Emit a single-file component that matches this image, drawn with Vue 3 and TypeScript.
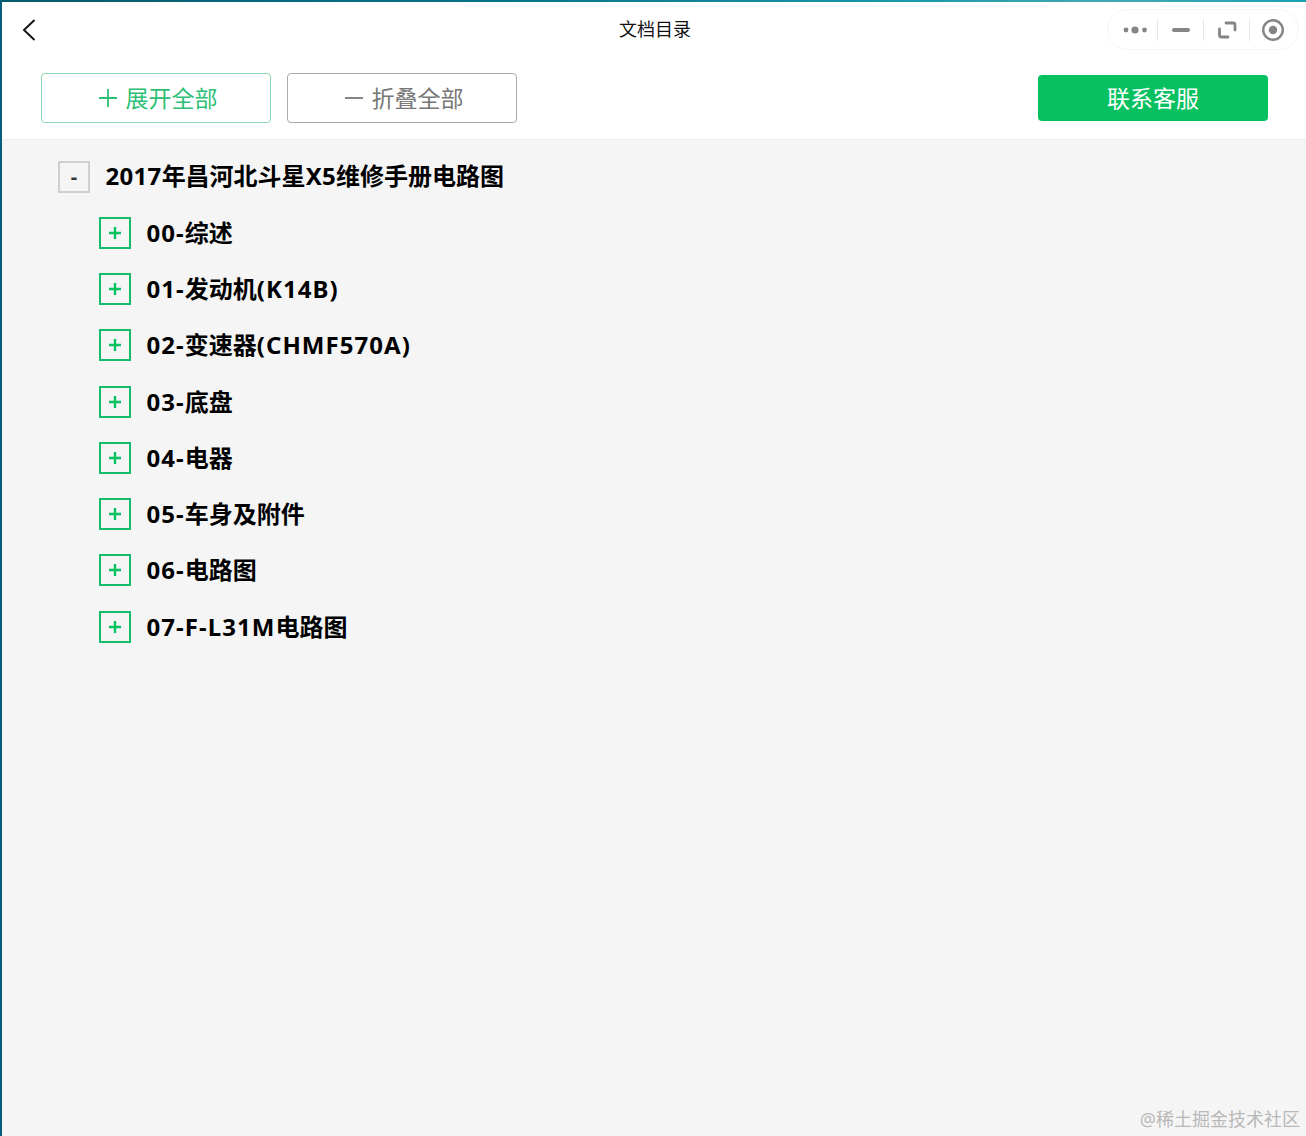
<script setup lang="ts">
interface Run {
  text: string
  latin: boolean
}

const splitRuns = (label: string): Run[] =>
  (label.match(/[\u4e00-\u9fff]+|[^\u4e00-\u9fff]+/g) ?? []).map((text) => ({
    text,
    latin: !/[\u4e00-\u9fff]/.test(text),
  }))

const rootRuns: Run[] = splitRuns('2017年昌河北斗星X5维修手册电路图')
const items: Run[][] = [
  '00-综述',
  '01-发动机(K14B)',
  '02-变速器(CHMF570A)',
  '03-底盘',
  '04-电器',
  '05-车身及附件',
  '06-电路图',
  '07-F-L31M电路图',
].map(splitRuns)
</script>

<template>
  <div class="window">
    <header class="titlebar">
      <button class="back" aria-label="返回">
        <svg width="14" height="24" viewBox="0 0 14 24" fill="none">
          <path d="M12.5 2 L2 12 L12.5 22" stroke="#111" stroke-width="1.9" />
        </svg>
      </button>
      <div class="title">文档目录</div>
      <div class="capsule">
        <span class="cap-btn">
          <svg width="26" height="12" viewBox="0 0 26 12" fill="#858585">
            <circle cx="4" cy="6" r="2.4" />
            <circle cx="13" cy="6" r="3.6" />
            <circle cx="22.5" cy="6" r="2.4" />
          </svg>
        </span>
        <span class="sep"></span>
        <span class="cap-btn">
          <svg width="20" height="6" viewBox="0 0 20 6"><rect x="1" y="1" width="18" height="4" rx="2" fill="#858585" /></svg>
        </span>
        <span class="sep"></span>
        <span class="cap-btn">
          <svg width="20" height="20" viewBox="0 0 20 20" fill="none" stroke="#858585" stroke-width="2.8" stroke-linecap="round">
            <path d="M9 3 H16 A2 2 0 0 1 18 5 V10" />
            <path d="M2.5 9 V15 A2 2 0 0 0 4.5 17 H11" />
          </svg>
        </span>
        <span class="sep"></span>
        <span class="cap-btn">
          <svg width="24" height="24" viewBox="0 0 24 24">
            <circle cx="12" cy="12" r="9.8" fill="none" stroke="#858585" stroke-width="2.4" />
            <circle cx="12" cy="12" r="4.2" fill="#858585" />
          </svg>
        </span>
      </div>
    </header>

    <section class="toolbar">
      <button class="outline expand">
        <svg width="18" height="18" viewBox="0 0 18 18"><path d="M9 0 V18 M0 9 H18" stroke="#2dbf75" stroke-width="1.8" /></svg>
        <span class="btn-text">展开全部</span>
      </button>
      <button class="outline collapse">
        <svg width="18" height="18" viewBox="0 0 18 18"><path d="M0 9 H18" stroke="#777" stroke-width="1.8" /></svg>
        <span class="btn-text">折叠全部</span>
      </button>
      <button class="service"><span class="btn-text">联系客服</span></button>
    </section>

    <main class="tree">
      <div class="row root-row">
        <span class="box minus">-</span>
        <span class="label"><span v-for="run in rootRuns" :key="run.text" :class="{ latin: run.latin }">{{ run.text }}</span></span>
      </div>
      <ul class="children">
        <li v-for="(runs, index) in items" :key="index" class="row">
          <span class="box plus">
            <svg width="14" height="14" viewBox="0 0 14 14"><path d="M7 1 V13 M1 7 H13" stroke="#07c160" stroke-width="2.4" /></svg>
          </span>
          <span class="label"><span v-for="run in runs" :key="run.text" :class="{ latin: run.latin }">{{ run.text }}</span></span>
        </li>
      </ul>
    </main>

    <div class="watermark">@稀土掘金技术社区</div>
  </div>
</template>

<style scoped>
.window {
  position: relative;
  box-sizing: border-box;
  width: 1306px;
  height: 1136px;
  overflow: hidden;
  display: flex;
  flex-direction: column;
  padding-left: 2px;
  background: #fff;
  font-family: "Noto Sans", "Noto Sans CJK SC", sans-serif;
  color: #000;
}
.window::before {
  content: "";
  position: absolute;
  left: 0;
  top: 0;
  right: 0;
  height: 2px;
  background: linear-gradient(90deg, #04596f 0%, #067588 40%, #1a9aa8 70%, #45a9b5 85%, #18a0b0 100%);
}
.window::after {
  content: "";
  position: absolute;
  left: 0;
  top: 0;
  bottom: 0;
  width: 2px;
  background: #04607a;
}
.titlebar {
  height: 58px;
  flex: none;
  display: flex;
  align-items: center;
  justify-content: space-between;
  position: relative;
  padding: 1px 7px 0 20px;
  box-sizing: border-box;
}
.back {
  padding: 0;
  border: 0;
  background: none;
  display: flex;
  width: 14px;
  height: 24px;
}
.title {
  position: absolute;
  left: 617px;
  top: 16px;
  font-size: 18px;
  line-height: 26px;
  color: #111;
}
.capsule {
  display: flex;
  align-items: center;
  box-sizing: border-box;
  height: 41px;
  width: 192px;
  border: 1px solid #f5f5f5;
  border-radius: 21px;
  padding: 0 3px 0 4px;
  background: #fff;
}
.cap-btn {
  flex: 1 1 0;
  display: flex;
  align-items: center;
  justify-content: center;
}
.sep {
  flex: none;
  width: 1px;
  height: 22px;
  background: #e6e6e6;
}
.toolbar {
  height: 82px;
  flex: none;
  display: flex;
  align-items: flex-start;
  box-sizing: border-box;
  padding: 15px 38px 0 39px;
  gap: 16px;
  border-bottom: 1px solid #ededed;
}
.outline {
  box-sizing: border-box;
  width: 230px;
  height: 50px;
  border-radius: 4px;
  background: #fff;
  font: inherit;
  font-size: 23px;
  display: flex;
  align-items: center;
  justify-content: center;
  gap: 9px;
  padding: 0 0 0 4px;
}
.btn-text {
  display: block;
  margin-top: -3px;
}
.expand {
  border: 1px solid #8ad9b2;
  color: #2dbf75;
}
.collapse {
  border: 1px solid #a9a9a9;
  color: #777;
}
.service {
  margin-left: auto;
  margin-top: 2px;
  width: 230px;
  height: 46px;
  border: 0;
  border-radius: 4px;
  background: #07c160;
  color: #fff;
  font: inherit;
  font-size: 23px;
  padding: 0;
}
.tree {
  flex: 1;
  background: #f5f5f5;
  padding: 8.5px 0 0 56px;
}
.row {
  display: flex;
  align-items: center;
  height: 56.25px;
}
.children {
  list-style: none;
  margin: 0;
  padding: 0 0 0 41px;
}
.box {
  box-sizing: border-box;
  flex: none;
  width: 32px;
  height: 32px;
  display: flex;
  align-items: center;
  justify-content: center;
}
.minus {
  border: 2px solid #cfcfcf;
  font-size: 20px;
  font-weight: 700;
  color: #333;
}
.plus {
  border: 2px solid #14bd6c;
}
.label {
  font-size: 24px;
  font-weight: 700;
  line-height: 32px;
  margin: 0 0 0 15.5px;
  white-space: nowrap;
}
.label .latin {
  letter-spacing: 1.05px;
}
.root-row .label {
  margin-top: -2px;
}
.root-row .label .latin {
  letter-spacing: 0.3px;
}
.watermark {
  position: absolute;
  right: 6px;
  bottom: 4px;
  font-size: 18px;
  line-height: 26px;
  color: #b8b8b8;
}
</style>
